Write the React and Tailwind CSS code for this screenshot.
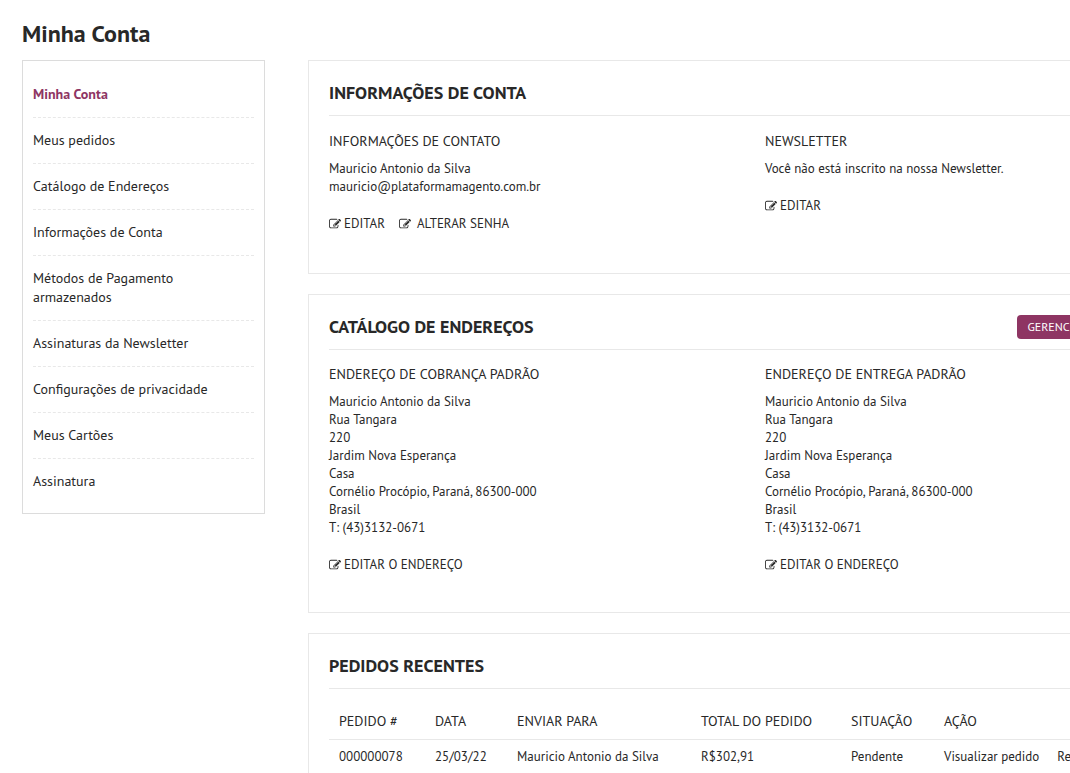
const menu = [
  'Minha Conta',
  'Meus pedidos',
  'Catálogo de Endereços',
  'Informações de Conta',
  'Métodos de Pagamento armazenados',
  'Assinaturas da Newsletter',
  'Configurações de privacidade',
  'Meus Cartões',
  'Assinatura',
];

const address = [
  'Mauricio Antonio da Silva',
  'Rua Tangara',
  '220',
  'Jardim Nova Esperança',
  'Casa',
  'Cornélio Procópio, Paraná, 86300-000',
  'Brasil',
  'T: (43)3132-0671',
];

function EditIcon() {
  return (
    <svg viewBox="0 0 1792 1792" className="h-3 w-3 shrink-0" fill="currentColor" aria-hidden="true">
      <path d="M888 1184l116-116-152-152-116 116v56h96v96h56zm440-720q-16-16-33 1l-350 350q-17 17-1 33t33-1l350-350q17-17 1-33zm80 594v190q0 119-84.5 203.5t-203.5 84.5h-832q-119 0-203.5-84.5t-84.5-203.5v-832q0-119 84.5-203.5t203.5-84.5h832q63 0 117 25 15 7 18 23 3 17-9 29l-49 49q-14 14-32 8-23-6-45-6h-832q-66 0-113 47t-47 113v832q0 66 47 113t113 47h832q66 0 113-47t47-113v-126q0-13 9-22l64-64q15-15 35-7t20 29zm-96-738l288 288-672 672h-288v-288zm444 132l-92 92-288-288 92-92q28-28 68-28t68 28l152 152q28 28 28 68t-28 68z" />
    </svg>
  );
}

function EditLink({ children, className = 'gap-[3px]' }) {
  return (
    <a href="#" className={`flex items-center uppercase ${className}`}>
      <EditIcon />
      {children}
    </a>
  );
}

function Card({ title, action, className = '', children }) {
  return (
    <section className={`border border-[#e8e8e8] px-5 pt-5 ${className}`}>
      <div className="flex items-center justify-between border-b border-[#e8e8e8] pb-[10px]">
        <h2 className="text-lg leading-6 font-bold uppercase">{title}</h2>
        {action}
      </div>
      {children}
    </section>
  );
}

function Box({ title, lines, children }) {
  return (
    <div>
      <h3 className="text-sm leading-[18px] uppercase">{title}</h3>
      <div className="mt-[10px]">
        {lines.map((line) => (
          <p key={line}>{line}</p>
        ))}
      </div>
      <div className="mt-[19px] flex">{children}</div>
    </div>
  );
}

export default function App() {
  return (
    <div className="h-screen overflow-hidden bg-white font-['PT_Sans','Lato',sans-serif] text-[13px] leading-[18px] text-[#282828]">
      <div className="min-w-[1207px] px-[22px] pt-[18px]">
        <h1 className="mb-[10px] text-2xl leading-8 font-bold">Minha Conta</h1>
        <div className="flex items-start gap-[43px]">
          <nav className="w-[243px] shrink-0 border border-[#dcdcdc] px-[10px] pt-[11px] pb-[9px]" aria-label="Minha Conta">
            <ul className="divide-y divide-dashed divide-[#e8e8e8] text-sm leading-[19px]">
              {menu.map((item, i) => (
                <li key={item} className="py-[13px]">
                  <a href="#" className={`block pr-10 ${i === 0 ? 'font-bold text-[#8e3563]' : ''}`}>
                    {item}
                  </a>
                </li>
              ))}
            </ul>
          </nav>
          <main className="flex min-w-0 flex-1 flex-col gap-5">
            <Card title="Informações de conta" className="min-h-[214px]">
              <div className="grid grid-cols-[436px_1fr] pt-4">
                <Box title="Informações de contato" lines={['Mauricio Antonio da Silva', 'mauricio@plataformamagento.com.br']}>
                  <EditLink>Editar</EditLink>
                  <EditLink className="ml-[14px] gap-[6px]">Alterar senha</EditLink>
                </Box>
                <Box title="Newsletter" lines={['Você não está inscrito na nossa Newsletter.']}>
                  <EditLink>Editar</EditLink>
                </Box>
              </div>
            </Card>
            <Card
              title="Catálogo de endereços"
              action={
                <button type="button" className="h-6 rounded-[4px] bg-[#8e3563] px-[10px] text-xs text-white uppercase">
                  Gerenciar endereços
                </button>
              }
            >
              <div className="grid grid-cols-[436px_1fr] pt-[15px] pb-[38px]">
                <Box title="Endereço de cobrança padrão" lines={address}>
                  <EditLink>Editar o endereço</EditLink>
                </Box>
                <Box title="Endereço de entrega padrão" lines={address}>
                  <EditLink>Editar o endereço</EditLink>
                </Box>
              </div>
            </Card>
            <Card title="Pedidos recentes" className="pb-5">
              <table className="mt-[15px] w-full table-fixed text-left">
                <thead className="border-b border-[#e8e8e8] text-sm leading-[18px] uppercase">
                  <tr>
                    <th className="w-[96px] px-[10px] pt-2 pb-[9px] font-normal">Pedido #</th>
                    <th className="w-[82px] px-[10px] pt-2 pb-[9px] font-normal">Data</th>
                    <th className="w-[184px] px-[10px] pt-2 pb-[9px] font-normal">Enviar para</th>
                    <th className="w-[150px] px-[10px] pt-2 pb-[9px] font-normal">Total do pedido</th>
                    <th className="w-[93px] px-[10px] pt-2 pb-[9px] font-normal">Situação</th>
                    <th className="px-[10px] pt-2 pb-[9px] font-normal">Ação</th>
                  </tr>
                </thead>
                <tbody>
                  <tr>
                    <td className="px-[10px] py-2">000000078</td>
                    <td className="px-[10px] py-2">25/03/22</td>
                    <td className="px-[10px] py-2">Mauricio Antonio da Silva</td>
                    <td className="px-[10px] py-2">R$302,91</td>
                    <td className="px-[10px] py-2">Pendente</td>
                    <td className="px-[10px] py-2">
                      <div className="flex gap-[18px] whitespace-nowrap">
                        <a href="#">Visualizar pedido</a>
                        <a href="#">Reordenar</a>
                      </div>
                    </td>
                  </tr>
                </tbody>
              </table>
            </Card>
          </main>
        </div>
      </div>
    </div>
  );
}
